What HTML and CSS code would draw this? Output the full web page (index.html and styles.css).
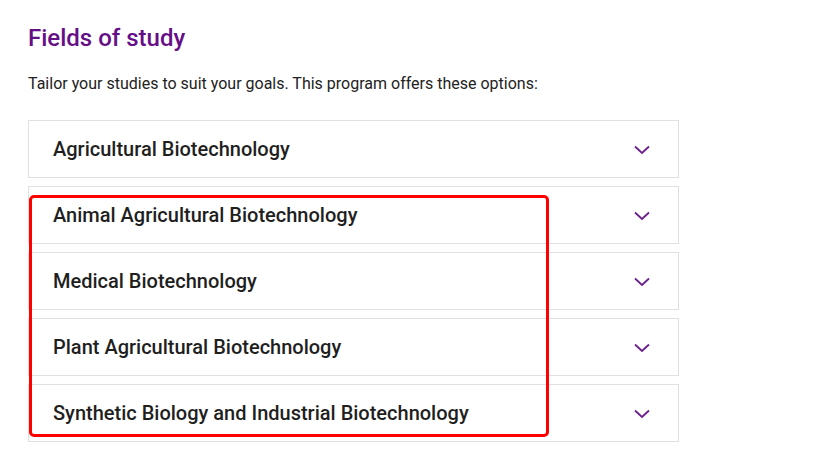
FILE: index.html
```html
<!DOCTYPE html>
<html lang="en">
<head>
<meta charset="utf-8">
<link rel="stylesheet" href="styles.css">
</head>
<body>
<main class="page">
  <h2 class="title">Fields of study</h2>
  <p class="intro">Tailor your studies to suit your goals. This program offers these options:</p>
  <div class="accordion">
    <div class="item"><span class="label">Agricultural Biotechnology</span><svg class="chev" width="16" height="10" viewBox="0 0 16 10"><path d="M1 1.5 L8 8 L15 1.5" fill="none" stroke="#6b1f8f" stroke-width="1.8"/></svg></div>
    <div class="item"><span class="label">Animal Agricultural Biotechnology</span><svg class="chev" width="16" height="10" viewBox="0 0 16 10"><path d="M1 1.5 L8 8 L15 1.5" fill="none" stroke="#6b1f8f" stroke-width="1.8"/></svg></div>
    <div class="item"><span class="label">Medical Biotechnology</span><svg class="chev" width="16" height="10" viewBox="0 0 16 10"><path d="M1 1.5 L8 8 L15 1.5" fill="none" stroke="#6b1f8f" stroke-width="1.8"/></svg></div>
    <div class="item"><span class="label">Plant Agricultural Biotechnology</span><svg class="chev" width="16" height="10" viewBox="0 0 16 10"><path d="M1 1.5 L8 8 L15 1.5" fill="none" stroke="#6b1f8f" stroke-width="1.8"/></svg></div>
    <div class="item"><span class="label">Synthetic Biology and Industrial Biotechnology</span><svg class="chev" width="16" height="10" viewBox="0 0 16 10"><path d="M1 1.5 L8 8 L15 1.5" fill="none" stroke="#6b1f8f" stroke-width="1.8"/></svg></div>
    <div class="highlight"></div>
  </div>
</main>
</body>
</html>
```
FILE: styles.css
```css
html, body {
  margin: 0;
  padding: 0;
  background: #ffffff;
}
body {
  font-family: Roboto, "Liberation Sans", Arial, sans-serif;
  color: #222222;
}
.page {
  padding: 24px 0 0 28px;
  width: 651px;
}
.title {
  margin: 0;
  font-size: 24px;
  font-weight: 500;
  line-height: 28px;
  color: #660e87;
}
.intro {
  margin: 22px 0 0 0;
  font-size: 16px;
  line-height: 20px;
  color: #222222;
}
.accordion {
  position: relative;
  margin-top: 26px;
  display: flex;
  flex-direction: column;
  gap: 8px;
}
.item {
  height: 56px;
  border: 1px solid #e0e0e0;
  display: flex;
  align-items: center;
  justify-content: space-between;
  padding: 0 28px 0 24px;
}
.label {
  font-size: 20px;
  font-weight: 500;
  color: #1f1f1f;
}
.chev {
  display: block;
  margin-top: 2px;
}
.highlight {
  position: absolute;
  left: 1px;
  top: 75px;
  width: 514px;
  height: 236px;
  border: 3px solid #ff0000;
  border-radius: 5px;
  pointer-events: none;
}
```
